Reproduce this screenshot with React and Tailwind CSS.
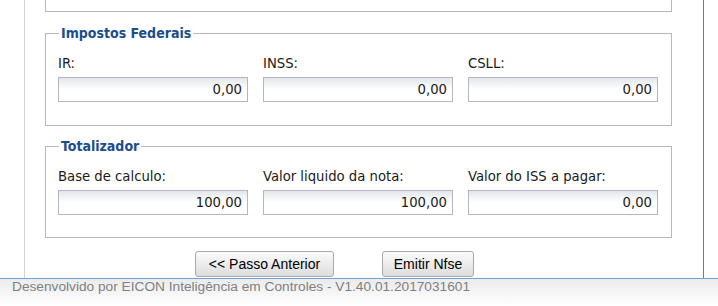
import React from "react";

const labelFont = "font-['DejaVu_Sans_Condensed','Liberation_Sans',sans-serif]";

function Campo({ label, value }) {
  return (
    <div className="flex flex-col w-[190px]">
      <label className={`${labelFont} text-[14.7px] leading-[18px] text-[#1a1a1a] mb-[5px]`}>
        {label}
      </label>
      <div className="h-[25px] border border-[#b5b5c5] bg-gradient-to-b from-[#e3e7eb] via-white to-white flex items-center justify-end pr-[5px]">
        <span className={`${labelFont} text-[14.7px] leading-none text-[#1a1a1a]`}>{value}</span>
      </div>
    </div>
  );
}

function Grupo({ titulo, campos, className }) {
  return (
    <fieldset className={`w-[627px] border border-[#b8b8c8] ${className}`}>
      <legend className={`${labelFont} ml-[13px] px-[2px] text-[14px] leading-[17px] font-bold text-[#1b4d8e]`}>
        {titulo}
      </legend>
      <div className="flex gap-[15px] pt-[12px] pl-[12px]">
        {campos.map((c) => (
          <Campo key={c.label} label={c.label} value={c.value} />
        ))}
      </div>
    </fieldset>
  );
}

export default function App() {
  return (
    <div className="w-[718px] h-[306px] bg-white flex flex-col overflow-hidden">
      <div className="ml-[24px] w-[680px] h-[278px] border-l border-r border-l-[#d2d2da] border-r-[#3c8ac3] pl-[20px] shrink-0">
        <div className="w-[627px] h-[12px] border-x border-b border-[#b8b8c8]" />

        <Grupo
          titulo="Impostos Federais"
          className="mt-[13px] pb-[23px]"
          campos={[
            { label: "IR:", value: "0,00" },
            { label: "INSS:", value: "0,00" },
            { label: "CSLL:", value: "0,00" },
          ]}
        />

        <Grupo
          titulo="Totalizador"
          className="mt-[12px] pb-[22px]"
          campos={[
            { label: "Base de calculo:", value: "100,00" },
            { label: "Valor liquido da nota:", value: "100,00" },
            { label: "Valor do ISS a pagar:", value: "0,00" },
          ]}
        />

        <div className="flex gap-[48px] mt-[13px] ml-[150px]">
          <button className="w-[139px] h-[26px] rounded-[3px] border border-[#a9a9a9] bg-gradient-to-b from-[#fbfbfb] to-[#dddddd] font-['Liberation_Sans',Arial,sans-serif] text-[14px] text-black">
            &lt;&lt; Passo Anterior
          </button>
          <button className="w-[92px] h-[26px] rounded-[3px] border border-[#a9a9a9] bg-gradient-to-b from-[#fbfbfb] to-[#dddddd] font-['Liberation_Sans',Arial,sans-serif] text-[14px] text-black">
            Emitir Nfse
          </button>
        </div>
      </div>

      <footer className="flex-1 border-t border-[#6fa3cf] bg-gradient-to-b from-[#ebebeb] to-white pl-[12px]">
        <p className="font-['Liberation_Sans',Arial,sans-serif] text-[13.7px] leading-[16px] text-[#808080]">
          Desenvolvido por EICON Inteligência em Controles - V1.40.01.2017031601
        </p>
      </footer>
    </div>
  );
}
